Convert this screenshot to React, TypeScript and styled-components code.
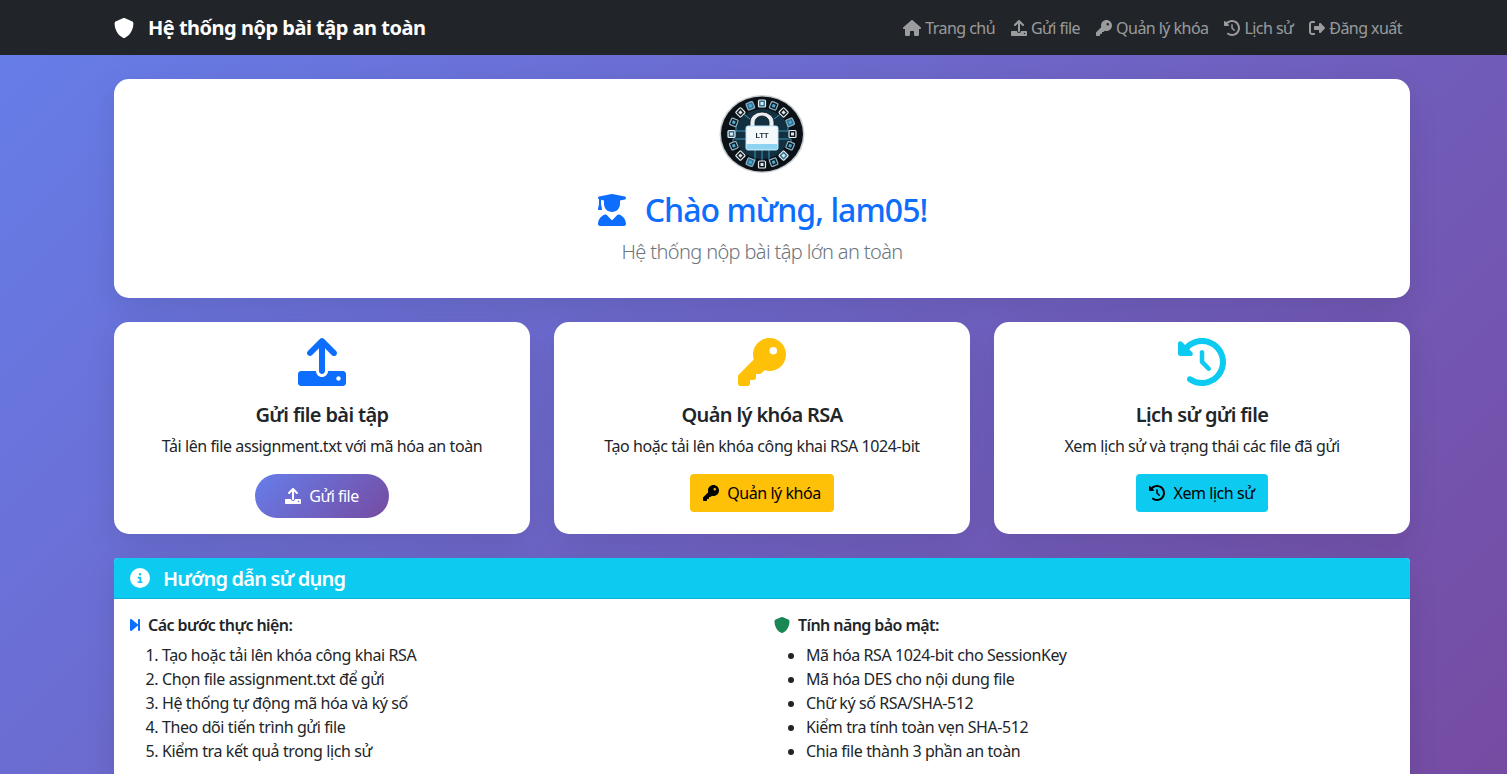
import React from 'react'
import styled, { createGlobalStyle } from 'styled-components'
import {
  FaCircleInfo,
  FaClockRotateLeft,
  FaForwardStep,
  FaHouse,
  FaKey,
  FaRightFromBracket,
  FaShield,
  FaUserGraduate,
} from 'react-icons/fa6'

const GlobalStyle = createGlobalStyle`
  html, body {
    margin: 0;
    height: 774px;
    overflow: hidden;
  }

  body {
    font-family: 'Noto Sans', 'Open Sans', sans-serif;
    font-size: 16px;
    line-height: 1.5;
    color: #212529;
    background: linear-gradient(135deg, #667eea 0%, #764ba2 100%);
  }

  * {
    box-sizing: border-box;
  }
`

const Navbar = styled.nav`
  height: 55px;
  background-color: #212529;
`

const NavInner = styled.div`
  display: flex;
  align-items: center;
  justify-content: space-between;
  width: 1320px;
  height: 100%;
  margin-left: 102px;
  padding: 0 12px;
`

const Brand = styled.a`
  display: flex;
  align-items: center;
  gap: 14px;
  font-size: 20px;
  font-weight: 700;
  letter-spacing: -0.5px;
  color: #fff;

  svg {
    width: 20px;
    height: 22px;
  }
`

const NavLinks = styled.div`
  display: flex;
`

const NavLink = styled.a<{ $iconWidth: number }>`
  display: flex;
  align-items: center;
  gap: 4px;
  padding: 8px;
  letter-spacing: -0.55px;
  color: rgba(255, 255, 255, 0.55);

  svg {
    width: ${({ $iconWidth }) => $iconWidth}px;
    height: 16px;
  }
`

const Main = styled.main`
  display: flex;
  flex-direction: column;
  gap: 24px;
  width: 1320px;
  margin-left: 102px;
  padding: 24px 12px 0;
`

const Panel = styled.section`
  background: #fff;
  border-radius: 15px;
  box-shadow: 0 10px 30px rgba(0, 0, 0, 0.1);
`

const Hero = styled(Panel)`
  display: flex;
  flex-direction: column;
  align-items: center;
  height: 219px;
  padding-top: 16px;
`

const Logo = styled.svg`
  width: 86px;
  height: 84px;
  margin-bottom: 12px;
  filter: blur(0.35px);
`

const Greeting = styled.h1`
  display: flex;
  align-items: center;
  gap: 18px;
  margin: 0 0 8px;
  font-size: 32px;
  font-weight: 500;
  line-height: 1.2;
  letter-spacing: -0.95px;
  color: #0d6efd;

  svg {
    width: 30px;
    height: 32px;
  }
`

const Lead = styled.p`
  margin: 0;
  font-size: 20px;
  font-weight: 300;
  letter-spacing: -0.63px;
  color: #6c757d;
`

const CardRow = styled.div`
  display: grid;
  grid-template-columns: repeat(3, 1fr);
  gap: 24px;
`

const ActionCard = styled(Panel)`
  display: flex;
  flex-direction: column;
  align-items: center;
  height: 212px;
  padding-top: 16px;
`

const CardIcon = styled.div<{ $color: string }>`
  display: flex;
  height: 48px;
  margin-bottom: 17px;
  font-size: 48px;
  color: ${({ $color }) => $color};
`

const CardTitle = styled.h5`
  margin: 0 0 7px;
  font-size: 20px;
  font-weight: 600;
  line-height: 1.2;
  letter-spacing: -0.62px;
`

const CardText = styled.p`
  margin: 0 0 16px;
  letter-spacing: -0.42px;
`

const Button = styled.a<{ $bg: string }>`
  display: flex;
  align-items: center;
  gap: 8px;
  height: 38px;
  padding: 0 13px;
  border-radius: 4px;
  letter-spacing: -0.45px;
  color: #000;
  background: ${({ $bg }) => $bg};
`

const GradientButton = styled.a`
  display: flex;
  align-items: center;
  gap: 8px;
  height: 44px;
  padding: 0 30px;
  border-radius: 25px;
  letter-spacing: -0.5px;
  color: #fff;
  background: linear-gradient(135deg, #667eea 0%, #764ba2 100%);
`

const GuideCard = styled.section`
  border-radius: 4px;
  overflow: hidden;
  background: #fff;
  box-shadow: 0 10px 30px rgba(0, 0, 0, 0.1);
`

const GuideHeader = styled.header`
  display: flex;
  align-items: center;
  gap: 13px;
  height: 41px;
  padding: 2px 16px 0;
  border-bottom: 1px solid rgba(0, 0, 0, 0.125);
  background: #0dcaf0;
  font-size: 20px;
  font-weight: 600;
  letter-spacing: -0.78px;
  color: #fff;

  svg {
    font-size: 20px;
    margin-top: -2px;
  }
`

const GuideBody = styled.div`
  display: grid;
  grid-template-columns: 1fr 1fr;
  padding: 16px 4px;
`

const GuideColumn = styled.div`
  padding: 0 12px;
`

const ColumnTitle = styled.h6`
  display: flex;
  align-items: center;
  gap: 8px;
  margin: 0 0 8px;
  font-size: 16px;
  font-weight: 600;
  line-height: 20px;
  letter-spacing: -0.58px;
`

const TitleIcon = styled.span<{ $color: string; $width: number }>`
  display: flex;
  width: ${({ $width }) => $width}px;
  color: ${({ $color }) => $color};

  svg {
    width: ${({ $width }) => $width}px;
    height: 16px;
  }
`

const StepList = styled.ol`
  margin: 0;
  padding-left: 32px;
  letter-spacing: -0.4px;
`

const FeatureList = styled.ul`
  margin: 0;
  padding-left: 32px;
  letter-spacing: -0.4px;
`

// the react-icons upload has a rounder tray than the one in the design
const UploadIcon = () => (
  <svg viewBox="0 0 512 512" width="1em" height="1em" fill="currentColor">
    <path d="M105.4 182.6c12.5 12.49 32.76 12.5 45.25.001L224 109.3V352c0 17.67 14.33 32 32 32 17.67 0 32-14.33 32-32V109.3l73.38 73.38c12.49 12.49 32.75 12.49 45.25-.001 12.49-12.5 12.49-32.75 0-45.25l-128-128C272.4 3.125 264.2 0 256 0S239.6 3.125 233.4 9.375L105.4 137.4C92.88 149.9 92.88 170.1 105.4 182.6zM480 352h-160c0 35.35-28.65 64-64 64s-64-28.65-64-64H32c-17.67 0-32 14.33-32 32v96c0 17.67 14.33 32 32 32h448c17.67 0 32-14.33 32-32v-96C512 366.3 497.7 352 480 352zM432 456c-13.2 0-24-10.8-24-24c0-13.2 10.8-24 24-24s24 10.8 24 24C456 445.2 445.2 456 432 456z" />
  </svg>
)

const navItems = [
  { icon: <FaHouse />, label: 'Trang chủ', iconWidth: 18 },
  { icon: <UploadIcon />, label: 'Gửi file', iconWidth: 16 },
  { icon: <FaKey />, label: 'Quản lý khóa', iconWidth: 16 },
  { icon: <FaClockRotateLeft />, label: 'Lịch sử', iconWidth: 16 },
  { icon: <FaRightFromBracket />, label: 'Đăng xuất', iconWidth: 16 },
]

const steps = [
  'Tạo hoặc tải lên khóa công khai RSA',
  'Chọn file assignment.txt để gửi',
  'Hệ thống tự động mã hóa và ký số',
  'Theo dõi tiến trình gửi file',
  'Kiểm tra kết quả trong lịch sử',
]

const features = [
  'Mã hóa RSA 1024-bit cho SessionKey',
  'Mã hóa DES cho nội dung file',
  'Chữ ký số RSA/SHA-512',
  'Kiểm tra tính toàn vẹn SHA-512',
  'Chia file thành 3 phần an toàn',
]

const chips = Array.from({ length: 16 }, (_, i) => (i * 360) / 16)

const traces = [
  'M27 36H17V28',
  'M27 44H14V50',
  'M59 36H69V27',
  'M59 44H72V51',
  'M36 55V66',
  'M43 55V70',
  'M50 55V65',
  'M31 24L23 18',
  'M55 24L63 18',
]

const LockLogo = () => (
  <Logo viewBox="0 0 86 84">
    <ellipse cx="43" cy="39" rx="42.5" ry="39" fill="#c9cdd0" />
    <ellipse cx="43" cy="39" rx="41" ry="37.5" fill="#0b1116" />
    <ellipse cx="43" cy="39" rx="27" ry="25" fill="#12303f" />
    {traces.map((d) => (
      <path key={d} d={d} fill="none" stroke="#3f93b8" strokeWidth="1" />
    ))}
    {chips.map((angle, i) => (
      <g key={angle} transform={`rotate(${angle} 43 39)`}>
        <rect
          x="39.5"
          y="5"
          width="7"
          height="7"
          rx="1"
          fill={i % 3 === 0 ? '#2a6f91' : '#10181e'}
          stroke={i % 2 === 0 ? '#e6edf0' : '#8fb6c8'}
          strokeWidth="1.2"
        />
        <rect x="41.5" y="7" width="3" height="3" fill={i % 2 === 0 ? '#dfe8ec' : '#4fa9cf'} />
      </g>
    ))}
    <path d="M31 32v-5a12 10 0 0 1 24 0v5h-5v-5a7 6 0 0 0-14 0v5z" fill="#e8eef1" stroke="#10181e" strokeWidth="0.8" />
    <rect x="27" y="31" width="32" height="24" rx="2" fill="#f4f9fc" stroke="#b9e2f5" strokeWidth="1" />
    <rect x="27.5" y="49" width="31" height="5.5" rx="1" fill="#8fd3f2" />
    <text x="43" y="43" textAnchor="middle" fontFamily="Liberation Sans, sans-serif" fontSize="7.5" fontWeight="700" fill="#1d2c36">
      LTT
    </text>
  </Logo>
)

const App = () => {
  return (
    <>
      <GlobalStyle />
      <Navbar>
        <NavInner>
          <Brand>
            <FaShield />
            <span>Hệ thống nộp bài tập an toàn</span>
          </Brand>
          <NavLinks>
            {navItems.map((item) => (
              <NavLink key={item.label} $iconWidth={item.iconWidth}>
                {item.icon}
                <span>{item.label}</span>
              </NavLink>
            ))}
          </NavLinks>
        </NavInner>
      </Navbar>
      <Main>
        <Hero>
          <LockLogo />
          <Greeting>
            <FaUserGraduate />
            <span>Chào mừng, lam05!</span>
          </Greeting>
          <Lead>Hệ thống nộp bài tập lớn an toàn</Lead>
        </Hero>
        <CardRow>
          <ActionCard>
            <CardIcon $color="#0d6efd">
              <UploadIcon />
            </CardIcon>
            <CardTitle>Gửi file bài tập</CardTitle>
            <CardText>Tải lên file assignment.txt với mã hóa an toàn</CardText>
            <GradientButton>
              <UploadIcon />
              <span>Gửi file</span>
            </GradientButton>
          </ActionCard>
          <ActionCard>
            <CardIcon $color="#ffc107">
              <FaKey />
            </CardIcon>
            <CardTitle>Quản lý khóa RSA</CardTitle>
            <CardText>Tạo hoặc tải lên khóa công khai RSA 1024-bit</CardText>
            <Button $bg="#ffc107">
              <FaKey />
              <span>Quản lý khóa</span>
            </Button>
          </ActionCard>
          <ActionCard>
            <CardIcon $color="#0dcaf0">
              <FaClockRotateLeft />
            </CardIcon>
            <CardTitle>Lịch sử gửi file</CardTitle>
            <CardText>Xem lịch sử và trạng thái các file đã gửi</CardText>
            <Button $bg="#0dcaf0">
              <FaClockRotateLeft />
              <span>Xem lịch sử</span>
            </Button>
          </ActionCard>
        </CardRow>
        <GuideCard>
          <GuideHeader>
            <FaCircleInfo />
            <span>Hướng dẫn sử dụng</span>
          </GuideHeader>
          <GuideBody>
            <GuideColumn>
              <ColumnTitle>
                <TitleIcon $color="#0d6efd" $width={10}>
                  <FaForwardStep />
                </TitleIcon>
                Các bước thực hiện:
              </ColumnTitle>
              <StepList>
                {steps.map((step) => (
                  <li key={step}>{step}</li>
                ))}
              </StepList>
            </GuideColumn>
            <GuideColumn>
              <ColumnTitle>
                <TitleIcon $color="#198754" $width={16}>
                  <FaShield />
                </TitleIcon>
                Tính năng bảo mật:
              </ColumnTitle>
              <FeatureList>
                {features.map((feature) => (
                  <li key={feature}>{feature}</li>
                ))}
              </FeatureList>
            </GuideColumn>
          </GuideBody>
        </GuideCard>
      </Main>
    </>
  )
}

export default App
